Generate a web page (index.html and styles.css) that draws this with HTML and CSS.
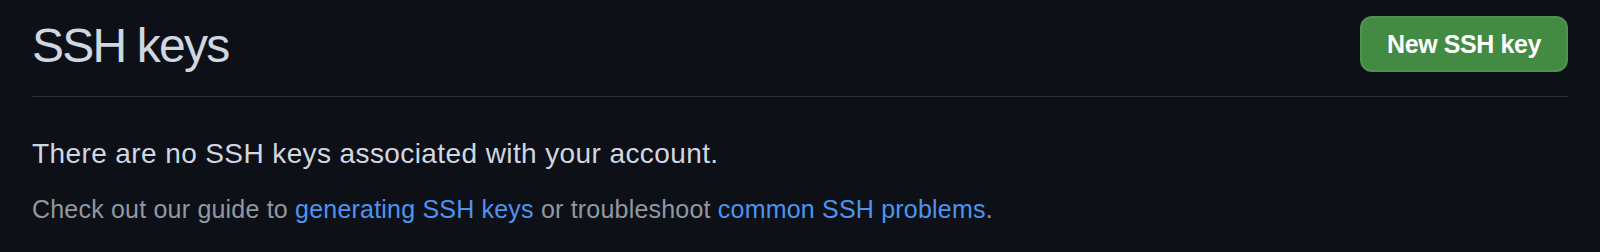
FILE: index.html
```html
<!DOCTYPE html>
<html lang="en">
<head>
<meta charset="utf-8">
<title>SSH keys</title>
<link rel="stylesheet" href="styles.css">
</head>
<body>
<div class="page">
  <div class="subhead">
    <h2 class="subhead-heading">SSH keys</h2>
    <a class="btn-primary" href="#">New SSH key</a>
  </div>
  <p class="blank-title">There are no SSH keys associated with your account.</p>
  <p class="blank-note">Check out our guide to <a href="#" class="link">generating SSH keys</a> or troubleshoot <a href="#" class="link">common SSH problems</a>.</p>
</div>
</body>
</html>
```

FILE: styles.css
```css
html, body {
  margin: 0;
  padding: 0;
  background: #0d1117;
}
body {
  font-family: "Liberation Sans", Arial, sans-serif;
  color: #d1d7e0;
}
.page {
  padding: 0 32px;
}
.subhead {
  display: flex;
  align-items: flex-start;
  justify-content: space-between;
  padding-top: 16px;
  padding-bottom: 20px;
  border-bottom: 1px solid #2a2f36;
}
.subhead-heading {
  margin: 0;
  font-size: 48px;
  font-weight: 400;
  line-height: 60px;
  letter-spacing: -1.8px;
  color: #d1d7e0;
}
.btn-primary {
  display: flex;
  align-items: center;
  box-sizing: border-box;
  height: 56px;
  padding: 0 25px;
  border-radius: 12px;
  background: #438a42;
  border: 2px solid rgba(240, 246, 252, 0.08);
  color: #ffffff;
  font-size: 25px;
  font-weight: 700;
  letter-spacing: -0.4px;
  text-decoration: none;
}
.blank-title {
  margin: 36px 0 0;
  font-size: 28px;
  line-height: 42px;
  letter-spacing: 0.4px;
  color: #d1d7e0;
}
.blank-note {
  margin: 15px 0 0;
  font-size: 25px;
  line-height: 39px;
  letter-spacing: 0.2px;
  color: #9198a1;
}
.link {
  color: #4c94f0;
  text-decoration: none;
}
```
